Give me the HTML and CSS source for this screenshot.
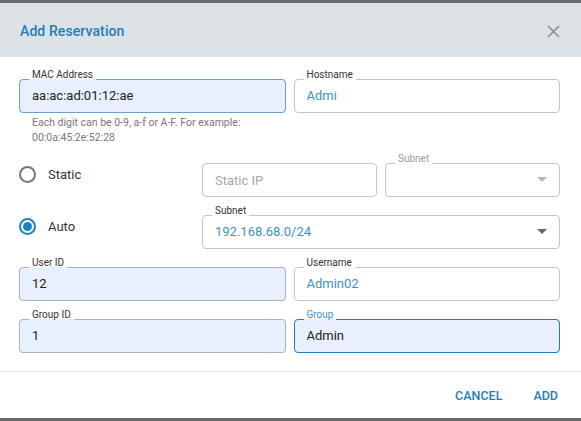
FILE: index.html
```html
<!DOCTYPE html>
<html lang="en">
<head>
<meta charset="utf-8">
<title>Add Reservation</title>
<link rel="stylesheet" href="styles.css">
</head>
<body>
<div class="dialog">
  <header class="dlg-header">
    <h2 class="dlg-title">Add Reservation</h2>
    <button class="close" aria-label="Close">
      <svg width="13" height="13" viewBox="0 0 13 13"><path d="M1 1L12 12M12 1L1 12" stroke="#8c8c8c" stroke-width="1.6" fill="none"/></svg>
    </button>
  </header>
  <div class="dlg-body">
    <div class="row2">
      <div class="col">
        <fieldset class="field filled accent">
          <legend>MAC Address</legend>
          <input class="inp" value="aa:ac:ad:01:12:ae">
        </fieldset>
        <p class="helper">Each digit can be 0-9, a-f or A-F. For example:<br>00:0a:45:2e:52:28</p>
      </div>
      <fieldset class="field">
        <legend>Hostname</legend>
        <input class="inp blue" value="Admi">
      </fieldset>
    </div>

    <div class="row3">
      <label class="radio"><span class="dot"></span>Static</label>
      <div class="box"><input class="inp" placeholder="Static IP"></div>
      <fieldset class="field disabled">
        <legend>Subnet</legend>
        <div class="select"><span class="val"></span><span class="caret"></span></div>
      </fieldset>

      <label class="radio on"><span class="dot"></span>Auto</label>
      <fieldset class="field span2">
        <legend>Subnet</legend>
        <div class="select"><span class="val blue">192.168.68.0/24</span><span class="caret"></span></div>
      </fieldset>
    </div>

    <div class="row2">
      <fieldset class="field filled grey">
        <legend>User ID</legend>
        <input class="inp" value="12">
      </fieldset>
      <fieldset class="field">
        <legend>Username</legend>
        <input class="inp blue" value="Admin02">
      </fieldset>
    </div>

    <div class="row2">
      <fieldset class="field filled grey">
        <legend>Group ID</legend>
        <input class="inp" value="1">
      </fieldset>
      <fieldset class="field filled focused">
        <legend>Group</legend>
        <input class="inp" value="Admin">
      </fieldset>
    </div>
  </div>
  <footer class="dlg-footer">
    <button class="btn">CANCEL</button>
    <button class="btn">ADD</button>
  </footer>
</div>
</body>
</html>
```

FILE: styles.css
```css
* { box-sizing: border-box; }
html, body { margin: 0; padding: 0; }
body {
  background: #6b6b6b;
  font-family: Roboto, "Liberation Sans", Arial, sans-serif;
  height: 421px;
  overflow: hidden;
}
.dialog {
  margin-top: 3px;
  height: 415px;
  background: #fff;
  display: flex;
  flex-direction: column;
}
.dlg-header {
  height: 54px;
  flex: none;
  background: #dde2e6;
  display: flex;
  align-items: center;
  justify-content: space-between;
  padding: 2px 21px 0 20px;
}
.dlg-title {
  margin: 0;
  font-size: 14px;
  font-weight: 500;
  letter-spacing: 0.1px;
  color: #1b80b6;
}
.close {
  border: 0;
  background: none;
  padding: 0;
  width: 13px;
  height: 13px;
  display: flex;
}
.dlg-body {
  padding: 13px 21px 18px 19px;
  display: flex;
  flex-direction: column;
  gap: 9px;
  border-bottom: 1px solid #e2e2e2;
}
.row2 {
  display: grid;
  grid-template-columns: 1fr 1fr;
  column-gap: 8px;
  align-items: start;
}
.row3 {
  display: grid;
  grid-template-columns: 1fr 1fr 1fr;
  column-gap: 8px;
  row-gap: 9px;
  align-items: center;
}
.col { display: flex; flex-direction: column; min-width: 0; }
.field {
  margin: 0;
  min-width: 0;
  border: 1px solid #c4c4c4;
  border-radius: 4px;
  padding: 0 12px 9px;
  background: #fff;
}
.field legend {
  font-size: 10px;
  line-height: 10px;
  padding: 0 3px 8px;
  margin-left: -3px;
  color: #333;
}
.field.filled { background: #e8f0fe; }
.field.accent { border-color: #6d9ec4; }
.field.grey { border-color: #aab3bc; }
.field.focused { border-color: #1f7ab0; }
.field.focused legend { color: #3b93c5; }
.field.disabled legend { color: #9a9a9a; }
.span2 { grid-column: span 2; }
.box {
  align-self: end;
  height: 34px;
  border: 1px solid #c4c4c4;
  border-radius: 4px;
  padding: 0 12px;
  display: flex;
  align-items: center;
}
.inp {
  display: block;
  width: 100%;
  height: 15px;
  border: 0;
  padding: 0;
  margin: 0;
  outline: none;
  background: transparent;
  font-family: inherit;
  font-size: 13px;
  line-height: 15px;
  color: #222;
}
.inp::placeholder { color: #a8a8a8; }
.blue { color: #3b93c5; }
.helper {
  margin: 2px 0 0 13px;
  font-size: 10.5px;
  line-height: 15px;
  color: #777;
}
.select {
  height: 15px;
  display: flex;
  align-items: center;
  justify-content: space-between;
}
.val { font-size: 13px; line-height: 15px; }
.caret {
  width: 0;
  height: 0;
  border-left: 5px solid transparent;
  border-right: 5px solid transparent;
  border-top: 5px solid #666;
}
.disabled .caret { border-top-color: #b5b5b5; }
.radio {
  display: flex;
  align-items: center;
  gap: 12px;
  font-size: 13px;
  color: #333;
  margin-top: -2px;
}
.dot {
  width: 17px;
  height: 17px;
  border: 2px solid #757575;
  border-radius: 50%;
  display: flex;
  align-items: center;
  justify-content: center;
}
.radio.on .dot { border-color: #1f82b9; }
.radio.on .dot::after {
  content: "";
  width: 9px;
  height: 9px;
  border-radius: 50%;
  background: #1f82b9;
}
.dlg-footer {
  flex: 1;
  display: flex;
  align-items: center;
  justify-content: flex-end;
  gap: 31px;
  padding: 0 23px 0 0;
}
.btn {
  border: 0;
  background: none;
  padding: 0;
  font-family: inherit;
  font-size: 12.5px;
  font-weight: 500;
  letter-spacing: 0;
  color: #1f7fb5;
}
```
